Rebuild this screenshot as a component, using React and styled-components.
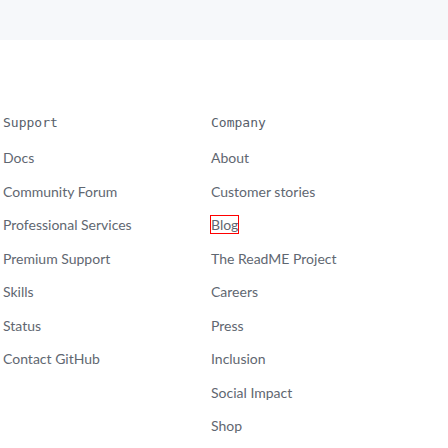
import React from "react"
import styled, {createGlobalStyle} from "styled-components"

const GlobalStyle = createGlobalStyle`
    body {
        margin: 0;
        background: #fff;
        font-family: "Lato", "Noto Sans", sans-serif;
    }
`

const TopBand = styled.div`
    height: 40px;
    background-color: #f6f8fa;
`

const Footer = styled.footer`
    display: grid;
    grid-template-columns: 208px 1fr;
    padding: 72px 0 0 3px;
`

const Column = styled.div`
    display: flex;
    flex-direction: column;
`

const Heading = styled.h3`
    margin: 0 0 14px;
    font-family: "DejaVu Sans Mono", "Liberation Mono", monospace;
    font-size: 13px;
    font-weight: 400;
    line-height: 21px;
    color: #57606a;
`

const List = styled.ul`
    list-style: none;
    margin: 0;
    padding: 0;
    display: flex;
    flex-direction: column;
    gap: 12.5px;
`

const Item = styled.li`
    font-size: 14px;
    line-height: 21px;
`

const Link = styled.a`
    color: #5f6771;
    text-decoration: none;
    outline: ${(props) => (props.focused ? "1px solid #ff0000" : "none")};
    outline-offset: 0;
`

const support = ["Docs", "Community Forum", "Professional Services", "Premium Support", "Skills", "Status", "Contact GitHub"]
const company = ["About", "Customer stories", "Blog", "The ReadME Project", "Careers", "Press", "Inclusion", "Social Impact", "Shop"]

const LinkColumn = ({title, items, focused}) => (
    <Column>
        <Heading>{title}</Heading>
        <List>
            {items.map((item) => (
                <Item key={item}>
                    <Link href="#" focused={item === focused}>{item}</Link>
                </Item>
            ))}
        </List>
    </Column>
)

const App = () => {
    return (
        <>
            <GlobalStyle />
            <TopBand />
            <Footer>
                <LinkColumn title="Support" items={support} />
                <LinkColumn title="Company" items={company} focused="Blog" />
            </Footer>
        </>
    )
}

export default App
